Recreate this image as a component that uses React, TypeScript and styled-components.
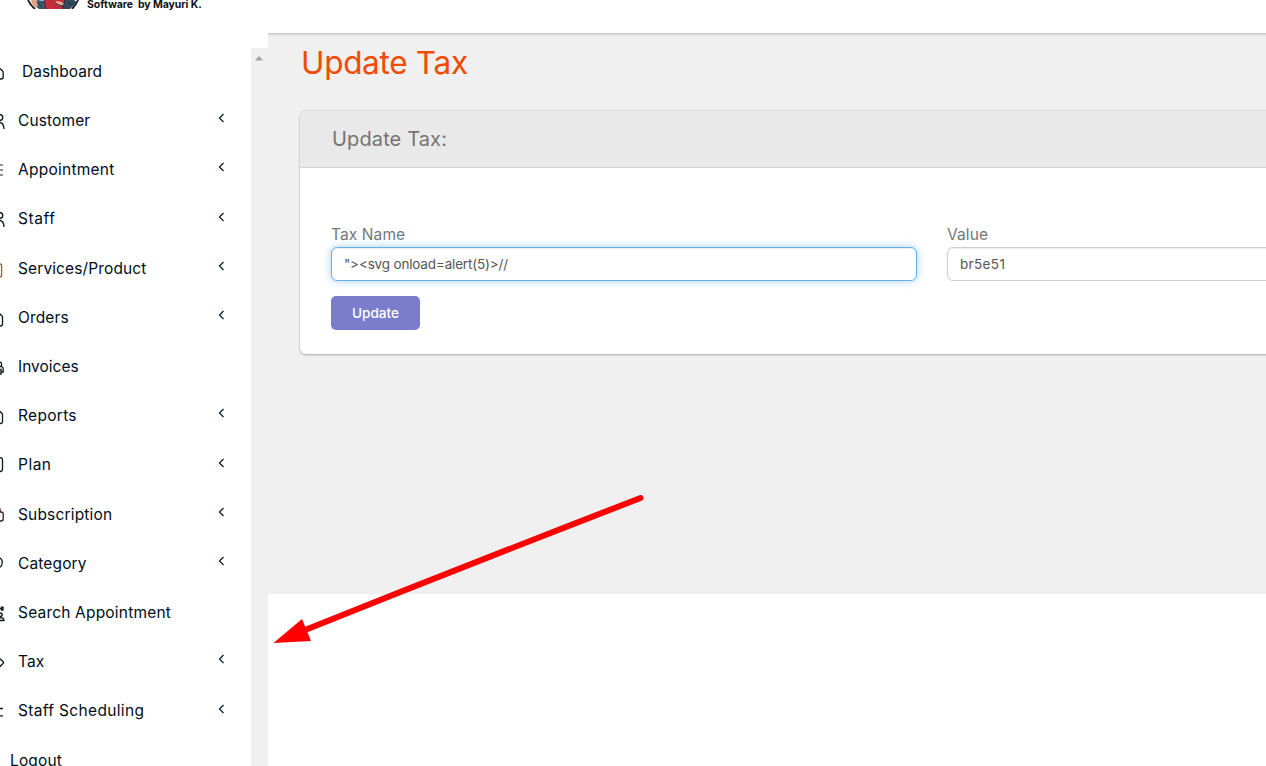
import React from 'react';
import styled, { createGlobalStyle } from 'styled-components';

const Global = createGlobalStyle`
  * { box-sizing: border-box; }
  body { margin: 0; background: #fff; font-family: Inter, "Liberation Sans", sans-serif; overflow: hidden; }
`;

const Page = styled.div`
  position: relative;
  display: flex;
  width: 1266px;
  height: 766px;
  overflow: hidden;
`;
const Sidebar = styled.aside`
  width: 268px;
  height: 766px;
  flex: none;
  display: flex;
  flex-direction: column;
`;
const Brand = styled.div`
  height: 48px;
  display: flex;
  align-items: flex-start;
  padding-left: 27px;
  flex: none;
`;
const BrandName = styled.div`
  height: 10px;
  overflow: hidden;
  margin-left: 8px;
  font-size: 10.5px;
  font-weight: 700;
  line-height: 9px;
  letter-spacing: -0.05px;
  white-space: pre;
  color: #111;
`;
const SidebarBody = styled.div`
  display: flex;
  flex: 1;
  min-height: 0;
`;
const Menu = styled.nav`
  width: 251px;
  margin-top: -1.25px;
  overflow: hidden;
`;
const Scrollbar = styled.div`
  width: 17px;
  background: #f0f0f0;
  padding: 7px 0 0 4px;
  line-height: 0;
`;
const MenuItem = styled.div`
  height: 49.21px;
  display: flex;
  align-items: center;
  color: #000d1a;
`;
const MenuIcon = styled.svg<{ $color?: string }>`
  width: 6px;
  height: 18px;
  flex: none;
  margin-top: 3px;
  fill: none;
  stroke: ${(p) => p.$color || '#10151c'};
  stroke-width: 1.3;
`;
const MenuLabel = styled.span<{ $indent: number; $spacing: number }>`
  flex: 1;
  padding-left: ${(p) => p.$indent - 6}px;
  font-size: 15.5px;
  letter-spacing: ${(p) => p.$spacing}px;
  white-space: nowrap;
`;
const Chevron = styled.svg`
  width: 7px;
  height: 10px;
  margin: -4.9px 26px 0 0;
  fill: none;
  stroke: #06212f;
  stroke-width: 1.3;
`;
const Main = styled.main`
  width: 998px;
  height: 766px;
  display: flex;
  flex-direction: column;
`;
const TopBar = styled.header`
  height: 33px;
  flex: none;
`;
const Content = styled.section`
  height: 561px;
  padding-left: 32px;
  background: linear-gradient(#c6c6c6 0, #d2d2d2 1px, #e6e6e6 2px, #f0f0f0 4px) #f0f0f0;
  overflow: hidden;
`;
const Title = styled.h1`
  margin: 10px 0 0;
  height: 40px;
  padding-left: 1px;
  line-height: 40px;
  font-size: 31.5px;
  font-weight: 400;
  color: #f04b00;
  letter-spacing: -0.3px;
`;
const Card = styled.div`
  margin-top: 28px;
  width: 1100px;
  height: 243px;
  border-radius: 6px;
  background: #fff;
  box-shadow: 0 0 2px 0 #bbb, 0 1px 2px #aaa;
`;
const CardHeader = styled.div`
  height: 57px;
  padding-left: 32px;
  border-bottom: 1px solid #d2d2d2;
  border-radius: 6px 6px 0 0;
  background: #e9e9e9;
  font-size: 20px;
  line-height: 56px;
  letter-spacing: 0.13px;
  color: #737373;
`;
const Fields = styled.div`
  display: flex;
  gap: 30px;
  padding: 55px 0 0 31px;
`;
const Field = styled.label`
  display: flex;
  flex-direction: column;
  width: 586px;
  flex: none;
  font-size: 15.5px;
  line-height: 24px;
  letter-spacing: 0.1px;
  color: #73777c;
`;
const Input = styled.input<{ $active?: boolean; $spacing: number }>`
  height: 34px;
  padding: 0 12px;
  border: 1px solid ${(p) => (p.$active ? '#66afe9' : '#ccc')};
  border-radius: 6px;
  outline: 0;
  background: #fff;
  box-shadow: ${(p) => (p.$active ? 'inset 0 1px 1px rgba(0,0,0,.075), 0 0 8px rgba(102,175,233,.6)' : 'inset 0 1px 1px rgba(0,0,0,.075)')};
  font: 13.5px Inter, sans-serif;
  letter-spacing: ${(p) => p.$spacing}px;
  color: #555;
`;
const UpdateButton = styled.button`
  display: block;
  width: 89px;
  height: 34px;
  margin: 15px 0 0 31px;
  padding: 0;
  border: 0;
  border-radius: 5px;
  background: #7c7ccc;
  color: #fff;
  font: 500 13.6px Inter, sans-serif;
`;
const Arrow = styled.svg`
  position: absolute;
  left: 0;
  top: 0;
  pointer-events: none;
`;

const people = 'M0 1.5Q2.8 2 2.8 4.5Q2.8 7 0 7.5M0 9.5Q3.8 10 4 16';
const items = [
  { label: 'Dashboard', icon: 'M-2 3L2.2 6.5Q3.2 7.5 3.2 9V13Q3.2 15 1 15H-2', indent: 22, arrow: false, spacing: 0 },
  { label: 'Customer', icon: people, indent: 18, arrow: true, spacing: 0.12 },
  { label: 'Appointment', icon: 'M0 3H3M0 8H3M0 13H3', color: '#6b6b78', indent: 18, arrow: true, spacing: 0.25 },
  { label: 'Staff', icon: people, indent: 18, arrow: true, spacing: 0.55 },
  { label: 'Services/Product', icon: 'M-2 3H0Q1.6 3 1.6 5V14Q1.6 16 0 16H-2', color: '#a85f1c', indent: 18, arrow: true, spacing: 0.12 },
  { label: 'Orders', icon: 'M-2 3H-1L2.5 6.5V14Q2.5 16 0 16H-2', indent: 18, arrow: true, spacing: 0.15 },
  { label: 'Invoices', icon: 'M-2 1.5L1.5 4V7M-2 7.5H1.5Q3.2 8 3.2 10V13H1M-2 10.5H1V15H-2', indent: 18, arrow: false, spacing: 0 },
  { label: 'Reports', icon: 'M-2 2.5H-1L2.5 6V14Q2.5 15.5 0 15.5H-2', indent: 18, arrow: true, spacing: 0.3 },
  { label: 'Plan', icon: 'M-2 .7H0Q2.5 .7 2.5 3V12Q2.5 14.5 0 14.5H-2', indent: 18, arrow: true, spacing: 0.5 },
  { label: 'Subscription', icon: 'M-2 2H0V5M-2 5H1Q3.2 5 3.2 7V12Q3.2 14 1 14H-2', color: '#35161b', indent: 18, arrow: true, spacing: 0.17 },
  { label: 'Category', icon: 'M-1 1.5Q2.3 3 2.3 6.5Q2.3 10 -1 12', indent: 18, arrow: true, spacing: 0.13 },
  { label: 'Search Appointment', icon: 'M-1 3.5H1.5M1.5 2.2H3V5H1.5ZM0 8Q2.2 8 2.2 9.7Q2.2 11.5 0 11.5M0 12.8H2Q3.8 13 4 15.5H0', indent: 18, arrow: false, spacing: 0.19 },
  { label: 'Tax', icon: 'M-2 3L3 7.5Q4 8.5 3 9.5L-1 13.5', indent: 18, arrow: true, spacing: 0.15 },
  { label: 'Staff Scheduling', icon: 'M0 5.5H3M0 12.8H3', indent: 18, arrow: true, spacing: 0.34 },
  { label: 'Logout', icon: '', indent: 10, arrow: false, spacing: 0.15 },
];

export default function App() {
  return (
    <Page>
      <Global />
      <Sidebar>
        <Brand>
          <svg width="52" height="9" viewBox="0 0 52 9">
            <path d="M1 0Q4 6 8 9M51 0Q49 5 45 9" fill="none" stroke="#151a20" strokeWidth="1.8" />
            <path d="M10 0L18 1L19 9H12L7 5Z" fill="#39566c" />
            <path d="M35 0H47L50 2L43 9H32Z" fill="#31495d" />
            <path d="M17 0H38L35 9H18Z" fill="#c52d3b" />
            <path d="M4 0H9L11 5L9 8L5 4Z" fill="#dda183" />
            <path d="M27 2L31 1L37 3V6L32 5Z" fill="#e3ac8c" />
            <path d="M17 0L19 9M38 0L35 9M27 2L32 5L37 6M41 2L46 5M11 3L15 7" fill="none" stroke="#202832" strokeWidth=".8" />
          </svg>
          <BrandName>Software  by Mayuri K.</BrandName>
        </Brand>
        <SidebarBody>
          <Menu>
            {items.map((it) => (
              <MenuItem key={it.label}>
                <MenuIcon $color={it.color}><path d={it.icon} /></MenuIcon>
                <MenuLabel $indent={it.indent} $spacing={it.spacing}>{it.label}</MenuLabel>
                {it.arrow && <Chevron><path d="M5.5 1L1.5 5L5.5 9" /></Chevron>}
              </MenuItem>
            ))}
          </Menu>
          <Scrollbar>
            <svg width="8" height="5"><path d="M0 4.5L4 0L8 4.5Z" fill="#a3a3a3" /></svg>
          </Scrollbar>
        </SidebarBody>
      </Sidebar>
      <Main>
        <TopBar />
        <Content>
          <Title>Update Tax</Title>
          <Card>
            <CardHeader>Update Tax:</CardHeader>
            <Fields>
              <Field>Tax Name<Input $active $spacing={-0.17} defaultValue={'"><svg onload=alert(5)>//'} /></Field>
              <Field>Value<Input $spacing={0.35} defaultValue="br5e51" /></Field>
            </Fields>
            <UpdateButton>Update</UpdateButton>
          </Card>
        </Content>
      </Main>
      <Arrow width="1266" height="766">
        <path d="M640.5 498Q470 564 300 632" fill="none" stroke="#f00" strokeWidth="6" strokeLinecap="round" />
        <path d="M273.5 643L302 619L311 641Z" fill="#f00" />
      </Arrow>
    </Page>
  );
}
